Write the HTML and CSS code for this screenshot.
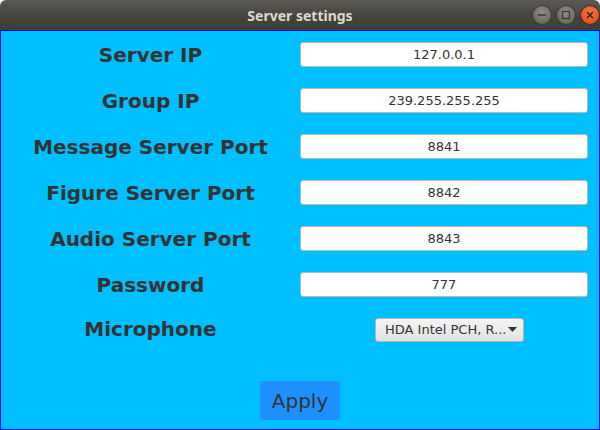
FILE: index.html
```html
<!DOCTYPE html>
<html>
<head>
<meta charset="utf-8">
<link rel="stylesheet" href="styles.css">
</head>
<body>
<div class="window">
  <div class="titlebar">
    <span class="title">Server settings</span>
    <div class="controls">
      <span class="ctl min"><svg width="18" height="18" viewBox="0 0 18 18"><line x1="5" y1="9" x2="13" y2="9" stroke="#3a3935" stroke-width="1.5"/></svg></span>
      <span class="ctl max"><svg width="18" height="18" viewBox="0 0 18 18"><rect x="5.5" y="5.5" width="7" height="7" fill="none" stroke="#3a3935" stroke-width="1.3"/></svg></span>
      <span class="ctl close"><svg width="18" height="18" viewBox="0 0 18 18"><path d="M6 6 L12 12 M12 6 L6 12" stroke="#3a2418" stroke-width="1.5"/></svg></span>
    </div>
  </div>
  <div class="content">
    <div class="form">
      <div class="label">Server IP</div><div class="cell"><div class="field">127.0.0.1</div></div>
      <div class="label">Group IP</div><div class="cell"><div class="field">239.255.255.255</div></div>
      <div class="label">Message Server Port</div><div class="cell"><div class="field">8841</div></div>
      <div class="label">Figure Server Port</div><div class="cell"><div class="field">8842</div></div>
      <div class="label">Audio Server Port</div><div class="cell"><div class="field">8843</div></div>
      <div class="label">Password</div><div class="cell"><div class="field">777</div></div>
      <div class="label mic">Microphone</div><div class="cell mic"><div class="combo"><span>HDA Intel PCH, R...</span><svg width="9" height="6" viewBox="0 0 9 6"><path d="M0 0 H9 L4.5 5 Z" fill="#333"/></svg></div></div>
    </div>
    <div class="actions"><button class="apply">Apply</button></div>
  </div>
</div>
</body>
</html>
```
FILE: styles.css
```css
html, body { margin: 0; padding: 0; }
body { width: 600px; height: 430px; overflow: hidden; font-family: "DejaVu Sans", sans-serif; }
.window { width: 600px; height: 430px; display: flex; flex-direction: column; }
.titlebar {
  height: 30px; flex: none; position: relative;
  background: linear-gradient(#5a5852, #45433e 60%, #3d3c38);
  display: flex; align-items: center; justify-content: center;
  border-radius: 6px 6px 0 0;
}
.title { color: #dcd8cf; font-family: "Noto Sans", "DejaVu Sans", sans-serif; font-weight: bold; font-size: 14px; padding-top: 1px; }
.controls { position: absolute; right: 1px; top: 6px; display: flex; gap: 6px; }
.ctl { width: 18px; height: 18px; border-radius: 50%; display: block; }
.ctl svg { display: block; }
.min, .max { background: radial-gradient(circle at 50% 35%, #8f8c86, #6e6b66 70%, #5d5a55); box-shadow: 0 0 0 1px #3a3935; }
.close { background: radial-gradient(circle at 50% 35%, #f4794a, #e2531f 70%, #c8461a); box-shadow: 0 0 0 1px #3a2c24; }
.content {
  flex: 1; background: #00bfff; border: 1px solid #0000ff;
  display: flex; flex-direction: column;
}
.form { display: grid; grid-template-columns: 299px 288px; grid-auto-rows: 46px; margin-top: 0; }
.label {
  display: flex; align-items: center; justify-content: center;
  font-weight: bold; font-size: 20px; color: #333333; padding-top: 1px;
}
.label.mic { padding-top: 0; padding-bottom: 3px; }
.cell { display: flex; align-items: center; }
.cell.mic { padding-bottom: 1px; }
.field {
  width: 288px; height: 25px; box-sizing: border-box; background: linear-gradient(#f6f6f6, #ffffff 4px);
  border: 1px solid #b9b9b9; border-radius: 3px; color: #333;
  font-size: 13px; display: flex; align-items: center; justify-content: center;
}
.combo {
  margin-left: 75px; width: 149px; height: 24px; box-sizing: border-box;
  background: linear-gradient(#f4f4f4, #e2e2e2); border: 1px solid #b4b4b4; border-radius: 3px;
  display: flex; align-items: center; justify-content: space-between; padding: 0 6px 0 9px;
  font-size: 13px; color: #333;
}
.actions { flex: 1; display: flex; justify-content: center; align-items: flex-end; padding-bottom: 9px; }
.apply {
  width: 80px; height: 39px; background: #1e90ff; border: none; border-radius: 3px;
  font-family: "DejaVu Sans", sans-serif; font-size: 20px; color: #333; padding: 0;
}
```
